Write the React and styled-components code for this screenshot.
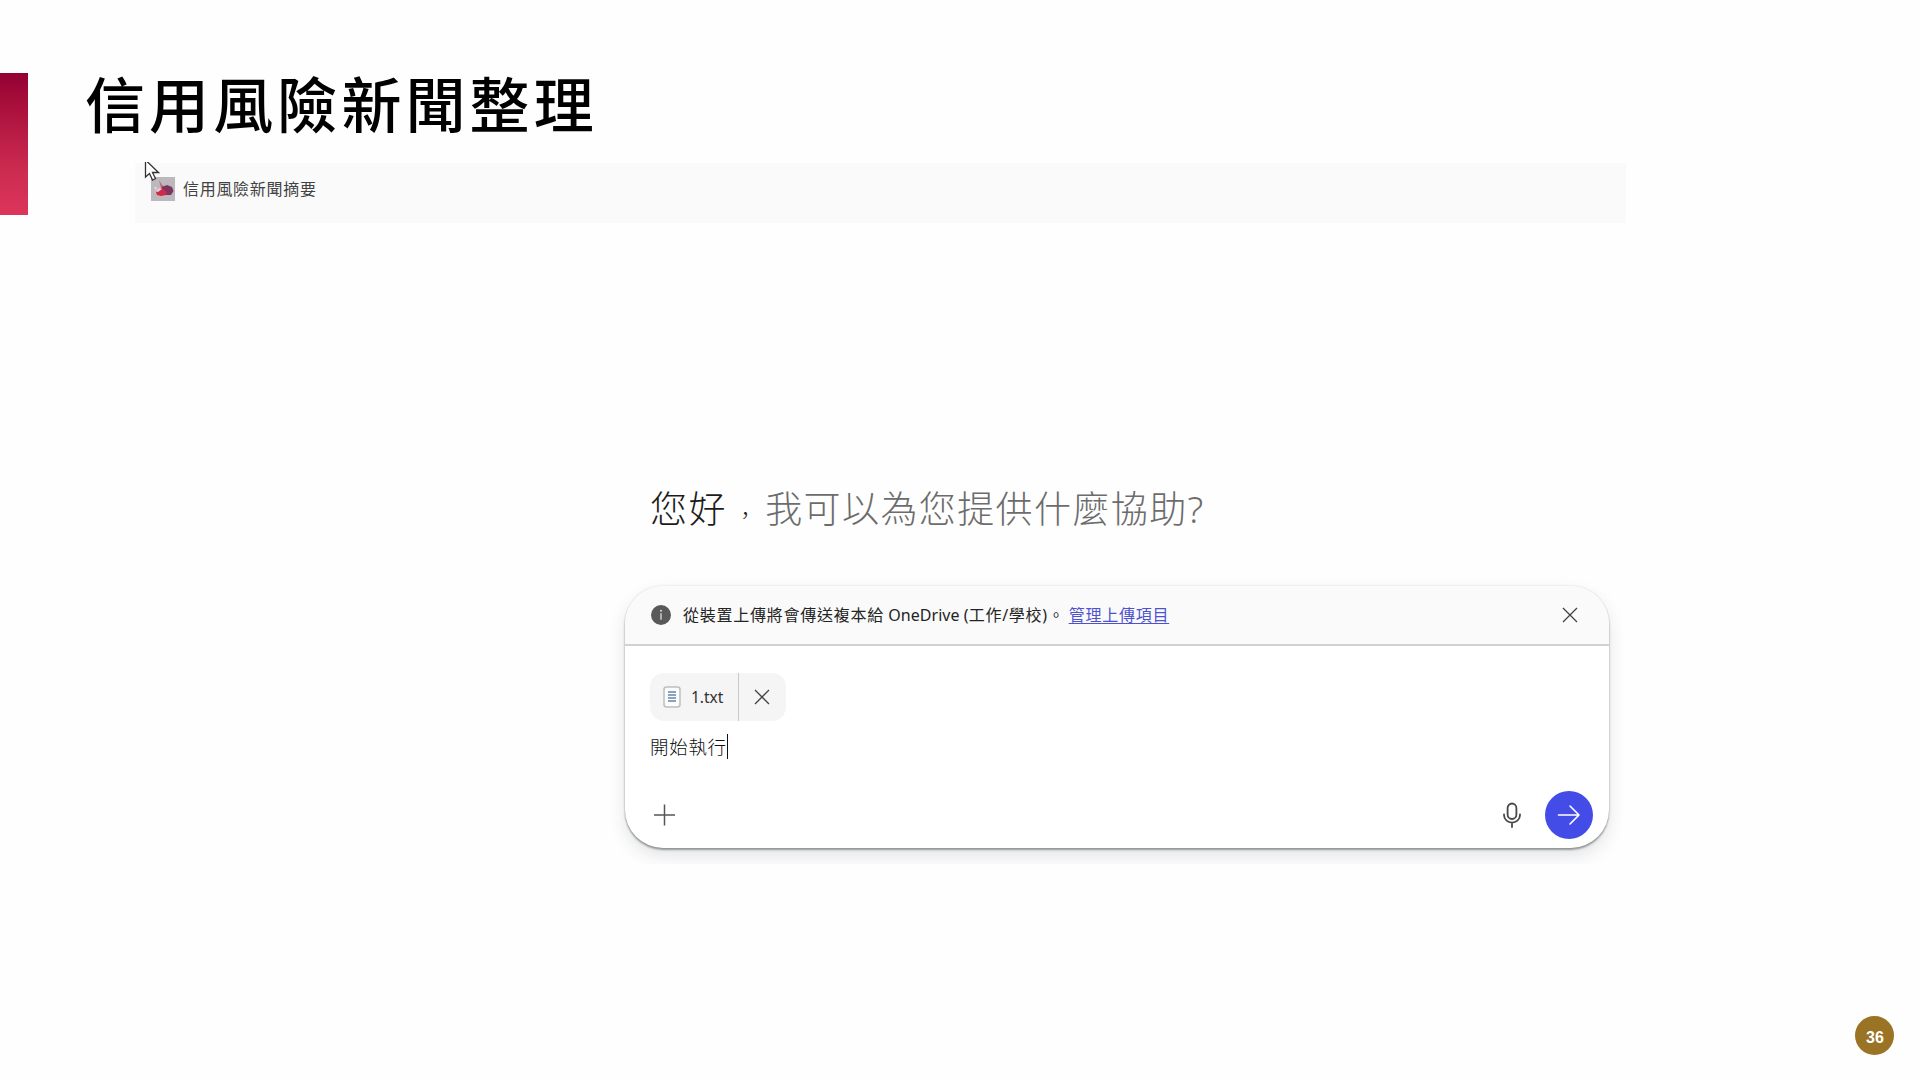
import React from "react";
import styled, {createGlobalStyle} from "styled-components";

const GlobalStyle = createGlobalStyle`
  * {
    box-sizing: border-box;
  }

  body {
    margin: 0;
    background: #fefefe;
    font-family: "Noto Sans", "Noto Sans CJK TC", sans-serif;
    color: #242424;
  }
`;

const Slide = styled.div`
  position: relative;
  width: 1920px;
  height: 1080px;
  overflow: hidden;
  background: #fefefe;
`;

const TitleRow = styled.header`
  display: flex;
  height: 163px;
  padding-top: 73px;
`;

const Accent = styled.div`
  flex: none;
  width: 28px;
  height: 142px;
  background: linear-gradient(#940034 0%, #a80f3b 22%, #cc2b50 68%, #dc355a 100%);
`;

const Title = styled.h1`
  margin: -3px 0 0 57px;
  height: 64px;
  line-height: 64px;
  font-family: "Noto Sans CJK TC", sans-serif;
  font-size: 60px;
  font-weight: 500;
  letter-spacing: 4.1px;
  color: #000;
  white-space: nowrap;
`;

const Screen = styled.main`
  width: 1491px;
  height: 701px;
  margin-left: 135px;
  overflow: hidden;
`;

const TopBar = styled.div`
  display: flex;
  align-items: flex-start;
  height: 60px;
  padding: 14px 16px 0;
  background: #fafafa;
  border-radius: 4px 0 0 0;
`;

const AgentName = styled.span`
  margin-left: 8px;
  line-height: 24px;
  font-size: 16px;
  letter-spacing: 0.7px;
  color: #424242;
`;

const Chat = styled.section`
  width: 984px;
  margin: 260px 0 0 490px;
`;

const Greeting = styled.h2`
  margin: 0;
  padding-left: 25px;
  height: 103px;
  line-height: 52px;
  font-size: 37px;
  font-weight: 300;
  letter-spacing: 1.4px;
  color: #1c1c1c;
  white-space: nowrap;
`;

const Comma = styled.span`
  display: inline-block;
  width: 38.4px;
  font-size: 22px;
  line-height: 1;
  text-align: center;
`;

const Question = styled.span`
  color: #6c6c6c;
`;

const Composer = styled.div`
  height: 262px;
  border-radius: 38px;
  background: #fff;
  overflow: hidden;
  box-shadow: 0 0 2px rgba(0, 0, 0, 0.16), 0 2px 2px rgba(70, 80, 80, 0.5), 0 8px 18px rgba(30, 40, 60, 0.12);
`;

const Notice = styled.div`
  display: flex;
  align-items: center;
  height: 60px;
  padding: 0 31px 0 26px;
  background: #fafafa;
  border-bottom: 2px solid #d1d1d1;
  font-size: 16px;
  white-space: nowrap;
`;

const NoticeText = styled.span`
  flex: 1;
  margin: -2px 0 0 12px;
  letter-spacing: 0.75px;
`;

const Latin = styled.span`
  letter-spacing: 0.05px;
`;

const UploadLink = styled.a`
  margin-left: 4px;
  color: #4f52cf;
  text-decoration: underline;
  text-underline-offset: 2px;
`;

const Body = styled.div`
  padding: 27px 16px 0 25px;
`;

const Chip = styled.div`
  display: flex;
  width: 136px;
  height: 48px;
  border-radius: 14px;
  background: #f5f5f5;
  overflow: hidden;
`;

const ChipFile = styled.div`
  display: flex;
  align-items: center;
  width: 89px;
  padding-left: 13px;
  border-right: 1px solid #c8c8c8;
  font-size: 15.5px;
  color: #333;

  span {
    margin-left: 10px;
  }
`;

const ChipClose = styled.div`
  display: flex;
  align-items: center;
  justify-content: center;
  width: 46px;
`;

const Prompt = styled.div`
  display: flex;
  align-items: center;
  height: 26px;
  margin-top: 12px;
  font-size: 18.5px;
  letter-spacing: 0.7px;
  font-weight: 300;
  color: #111;
`;

const Caret = styled.i`
  width: 1px;
  height: 25px;
  background: #111;
`;

const Actions = styled.div`
  display: flex;
  align-items: center;
  height: 49px;
  margin-top: 31px;
`;

const ActionGroup = styled.div`
  display: flex;
  align-items: center;
  gap: 24px;
  margin-left: auto;
`;

const Send = styled.div`
  display: flex;
  align-items: center;
  justify-content: center;
  width: 48px;
  height: 48px;
  border-radius: 50%;
  background: #444ce7;
`;

const PageNumber = styled.div`
  position: absolute;
  right: 26px;
  bottom: 25px;
  width: 39px;
  height: 39px;
  border-radius: 50%;
  background: #9b7325;
  color: #fff;
  font: bold 16px/43px "Liberation Sans", Arial, sans-serif;
  text-align: center;
  text-indent: 1px;
`;

const Cursor = styled.svg`
  position: absolute;
  left: 144px;
  top: 162px;
`;

const AgentIcon = () => (
    <svg width="24" height="24" viewBox="0 0 24 24">
        <rect width="24" height="24" fill="#bcb8bb"/>
        <path d="M8 3l3 5 4 2-5 1z" fill="#b06a80"/>
        <path d="M11 10l5-2 5 2 1.5 4-2.5 4-6 0-4-3z" fill="#7d3560"/>
        <path d="M5 15q3-5 7-3l4 3-1 3-5 1-4-1z" fill="#d02a4a"/>
        <path d="M4 14l4-3 3 1-4 3z" fill="#e2ccd5"/>
        <circle cx="4.5" cy="11" r="1" fill="#eee6ea"/>
    </svg>
);

const InfoIcon = () => (
    <svg width="20" height="20" viewBox="0 0 20 20">
        <circle cx="10" cy="10" r="10" fill="#595959"/>
        <path d="M10 8.3v6.4" stroke="#ddd" strokeWidth="1.3"/>
        <circle cx="10" cy="5.8" r="1" fill="#ddd"/>
    </svg>
);

const CloseIcon = () => (
    <svg width="16" height="16" viewBox="0 0 16 16" fill="none" stroke="#424242" strokeWidth="1.3">
        <path d="M1 1l14 14M15 1L1 15"/>
    </svg>
);

const FileIcon = () => (
    <svg width="18" height="22" viewBox="0 0 18 22">
        <rect x="1" y="1" width="16" height="20" rx="2.5" fill="#fbfcfc" stroke="#b9c0bd" strokeWidth="1.5"/>
        <path d="M5 6h8M5 9h8M5 12h8M5 15h8" stroke="#6a83a8" strokeWidth="1.7"/>
    </svg>
);

const PlusIcon = () => (
    <svg width="29" height="22" viewBox="0 0 29 22" fill="none" stroke="#555" strokeWidth="1.5">
        <path d="M14.5 0.5v21M4 11h21"/>
    </svg>
);

const MicIcon = () => (
    <svg width="18" height="26" viewBox="0 0 18 26" fill="none" stroke="#484848" strokeWidth="1.8" strokeLinecap="round">
        <rect x="4.6" y="1.5" width="8.8" height="15.5" rx="4.4"/>
        <path d="M1 12.5v0.5a8 7.6 0 0 0 16 0v-0.5M9 21v4"/>
    </svg>
);

const ArrowIcon = () => (
    <svg width="24" height="24" viewBox="0 0 24 24" fill="none" stroke="#fff" strokeWidth="1.6" strokeLinecap="round" strokeLinejoin="round">
        <path d="M1.5 12h20.5M13 3l9 9-9 9"/>
    </svg>
);

const App = () => {
    return (
        <>
            <GlobalStyle/>
            <Slide>
                <TitleRow>
                    <Accent/>
                    <Title>信用風險新聞整理</Title>
                </TitleRow>
                <Screen>
                    <TopBar>
                        <AgentIcon/>
                        <AgentName>信用風險新聞摘要</AgentName>
                    </TopBar>
                    <Chat>
                        <Greeting>您好<Comma>，</Comma><Question>我可以為您提供什麼協助?</Question></Greeting>
                        <Composer>
                            <Notice>
                                <InfoIcon/>
                                <NoticeText>
                                    從裝置上傳將會傳送複本給<Latin> OneDrive (</Latin>工作/學校)。
                                    <UploadLink href="#">管理上傳項目</UploadLink>
                                </NoticeText>
                                <CloseIcon/>
                            </Notice>
                            <Body>
                                <Chip>
                                    <ChipFile>
                                        <FileIcon/>
                                        <span>1.txt</span>
                                    </ChipFile>
                                    <ChipClose>
                                        <CloseIcon/>
                                    </ChipClose>
                                </Chip>
                                <Prompt>開始執行<Caret/></Prompt>
                                <Actions>
                                    <PlusIcon/>
                                    <ActionGroup>
                                        <MicIcon/>
                                        <Send>
                                            <ArrowIcon/>
                                        </Send>
                                    </ActionGroup>
                                </Actions>
                            </Body>
                        </Composer>
                    </Chat>
                </Screen>
                <Cursor width="16" height="20" viewBox="0 0 16 20">
                    <path d="M1.5 -2v17l4-3.5 3 6.5 3-1.5-3-6h6z" fill="#fff" stroke="#333" strokeWidth="1.3"/>
                </Cursor>
                <PageNumber>36</PageNumber>
            </Slide>
        </>
    );
};

export default App;
